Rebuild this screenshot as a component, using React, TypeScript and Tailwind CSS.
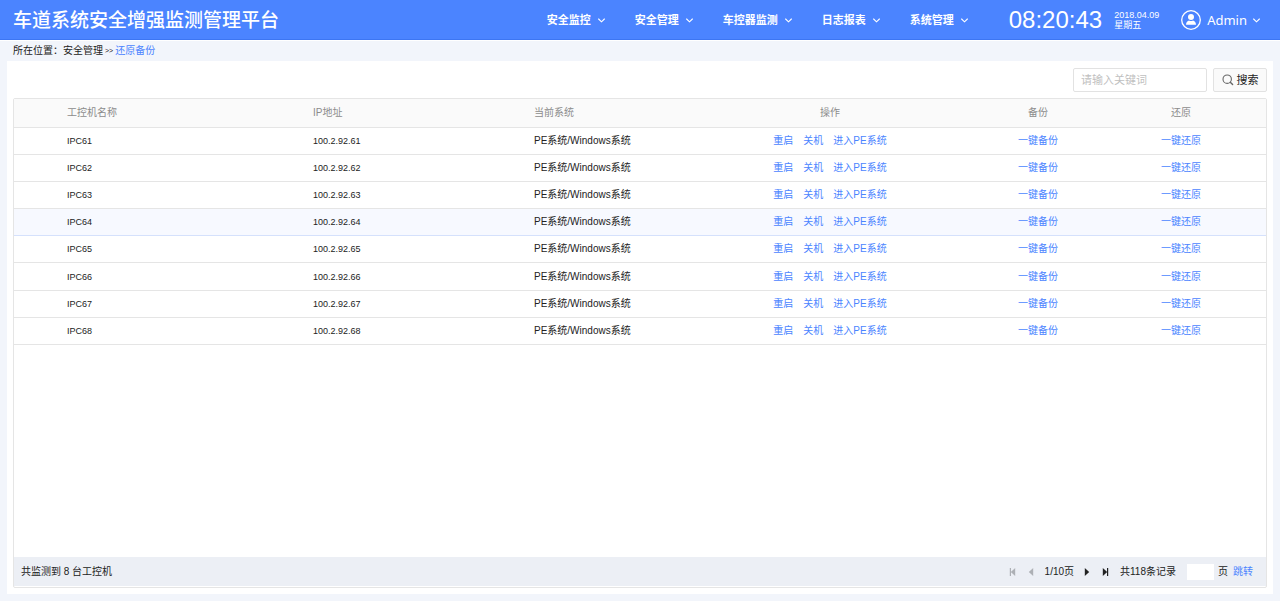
import { useState } from "react";

const NAV_ITEMS = ["安全监控", "安全管理", "车控器监测", "日志报表", "系统管理"];

const MACHINES = [61, 62, 63, 64, 65, 66, 67, 68].map((n) => ({
  name: `IPC${n}`,
  ip: `100.2.92.${n}`,
  system: "PE系统/Windows系统",
}));

const ACTIONS = ["重启", "关机", "进入PE系统"];

/* ---------------- ICONS ---------------- */

function ChevronDown() {
  return (
    <svg width="7" height="5" viewBox="0 0 7 5" fill="none" stroke="currentColor" aria-hidden="true">
      <path d="M0.6 1 L3.5 3.8 L6.4 1" strokeWidth="1.1" strokeLinecap="round" />
    </svg>
  );
}

function UserIcon() {
  return (
    <svg width="20" height="20" viewBox="0 0 20 20" fill="none" aria-hidden="true">
      <circle cx="10" cy="10" r="9.3" stroke="white" strokeWidth="1.3" />
      <circle cx="10" cy="7" r="3" fill="white" />
      <path d="M5 14.8 C5 11.8 6.8 10.9 8 10.5 C9.2 11.3 10.8 11.3 12 10.5 C13.2 10.9 15 11.8 15 14.8 Z" fill="white" />
    </svg>
  );
}

function SearchIcon() {
  return (
    <svg width="12" height="12" viewBox="0 0 12 12" fill="none" stroke="#666" aria-hidden="true">
      <circle cx="5.2" cy="5.2" r="4.2" strokeWidth="1.1" />
      <path d="M8.3 8.3 L10.6 10.6" strokeWidth="1.4" strokeLinecap="round" />
    </svg>
  );
}

function PageArrow({ bar = false, flip = false }: { bar?: boolean; flip?: boolean }) {
  return (
    <svg
      width="7"
      height="8"
      viewBox="0 0 7 8"
      fill="currentColor"
      className={flip ? "rotate-180" : ""}
      aria-hidden="true"
    >
      <path d="M0.8 0 L5.2 4 L0.8 8 Z" />
      {bar && <path d="M5 0 H6.2 V8 H5 Z" />}
    </svg>
  );
}

/* ---------------- HEADER ---------------- */

function Header() {
  return (
    <header className="flex h-10 shrink-0 items-center justify-between border-b border-[#3d76f2] bg-[#4b84ff] pl-[13px] pr-5 pt-px text-white">
      <h1 className="whitespace-nowrap pt-px text-[19px] font-medium leading-6">车道系统安全增强监测管理平台</h1>

      <div className="flex items-center">
        <nav className="flex gap-[30px]">
          {NAV_ITEMS.map((item) => (
            <button
              key={item}
              className="flex items-center gap-[7px] whitespace-nowrap text-[11px] font-bold leading-4"
            >
              {item}
              <ChevronDown />
            </button>
          ))}
        </nav>

        <time className="ml-[41px] text-[24px] leading-7">08:20:43</time>
        <div className="ml-3 w-12 text-[9px] leading-[10px]">
          <p>2018.04.09</p>
          <p>星期五</p>
        </div>

        <button className="ml-[19px] flex items-center font-['Noto_Sans',sans-serif] text-[13px] leading-5">
          <UserIcon />
          <span className="ml-[6px] mr-[6px]">Admin</span>
          <ChevronDown />
        </button>
      </div>
    </header>
  );
}

/* ---------------- TABLE ---------------- */

function MachineTable() {
  return (
    <table className="h-[246px] w-full table-fixed border-collapse text-left">
      <colgroup>
        <col className="w-[299px]" />
        <col className="w-[221px]" />
        <col className="w-[146px]" />
        <col className="w-[300px]" />
        <col className="w-[116px]" />
        <col className="w-[170px]" />
      </colgroup>
      <thead>
        <tr className="h-7 border-b border-[#e5e5e5] bg-[#fafafa] text-[#8c8c8c] [&>th]:font-normal">
          <th className="pl-[53px]">工控机名称</th>
          <th>IP地址</th>
          <th>当前系统</th>
          <th className="text-center">操作</th>
          <th className="text-center">备份</th>
          <th className="text-center">还原</th>
        </tr>
      </thead>
      <tbody>
        {MACHINES.map((m) => (
          <tr
            key={m.name}
            className={
              m.name === "IPC64"
                ? "border-y border-[#d5e1fc] bg-[#f7f9ff]"
                : "border-b border-[#e5e5e5] hover:bg-[#f7f9ff]"
            }
          >
            <td className="pl-[53px] text-[9px]">{m.name}</td>
            <td className="text-[9px]">{m.ip}</td>
            <td>{m.system}</td>
            <td>
              <div className="flex justify-center gap-[10px] text-[#4b84ff]">
                {ACTIONS.map((action) => (
                  <a key={action} href="#">
                    {action}
                  </a>
                ))}
              </div>
            </td>
            <td className="text-center">
              <a href="#" className="text-[#4b84ff]">一键备份</a>
            </td>
            <td className="text-center">
              <a href="#" className="text-[#4b84ff]">一键还原</a>
            </td>
          </tr>
        ))}
      </tbody>
    </table>
  );
}

/* ---------------- FOOTER ---------------- */

function TableFooter() {
  const [page, setPage] = useState("");

  return (
    <div className="mt-auto mb-px flex h-[29px] items-center justify-between bg-[#eceff5] pl-[7px] pr-[13px]">
      <p>共监测到 8 台工控机</p>

      <div className="flex items-center">
        <button disabled aria-label="首页" className="text-[#adb0b5]">
          <PageArrow bar flip />
        </button>
        <button disabled aria-label="上一页" className="ml-[11px] text-[#adb0b5]">
          <PageArrow flip />
        </button>
        <span className="ml-[11px]">1/10页</span>
        <button aria-label="下一页" className="ml-[10px]">
          <PageArrow />
        </button>
        <button aria-label="末页" className="ml-[11px]">
          <PageArrow bar />
        </button>
        <span className="ml-[11px]">共118条记录</span>
        <input
          id="page"
          value={page}
          onChange={(e) => setPage(e.target.value)}
          className="ml-[11px] h-4 w-[27px] bg-white text-center outline-none"
        />
        <label htmlFor="page" className="ml-[4px]">页</label>
        <a href="#" className="ml-[5px] text-[#4b84ff]">跳转</a>
      </div>
    </div>
  );
}

export default function App() {
  const [keyword, setKeyword] = useState("");

  return (
    <div className="flex min-h-screen flex-col bg-[#f2f5fb] font-['Liberation_Sans','Noto_Sans_CJK_SC',sans-serif] text-[10px] leading-4 text-[#222]">
      <Header />

      <div className="flex h-[21px] items-center gap-[2px] border-t border-white pl-[13px]">
        <span>所在位置：安全管理</span>
        <span className="text-[7px]">&gt;&gt;</span>
        <a href="#" className="text-[#4b84ff]">还原备份</a>
      </div>

      <main className="mx-[7px] mb-[7px] flex flex-1 flex-col bg-white px-[6px] pb-[6px] pt-[7px]">
        {/* Search */}
        <form className="mb-[6px] flex justify-end gap-[6px] text-[11px]" onSubmit={(e) => e.preventDefault()}>
          <input
            aria-label="关键词"
            value={keyword}
            onChange={(e) => setKeyword(e.target.value)}
            placeholder="请输入关键词"
            className="h-6 w-[134px] rounded-xs border border-[#e2e2e2] px-[7px] outline-none placeholder:text-[#bfbfbf]"
          />
          <button className="flex h-6 w-[54px] items-center justify-center gap-[3px] rounded-xs border border-[#e2e2e2] bg-[#fafafa]">
            <SearchIcon />
            搜索
          </button>
        </form>

        {/* Machines */}
        <section className="flex flex-1 flex-col rounded-xs border border-[#e5e5e5]">
          <MachineTable />
          <TableFooter />
        </section>
      </main>
    </div>
  );
}
